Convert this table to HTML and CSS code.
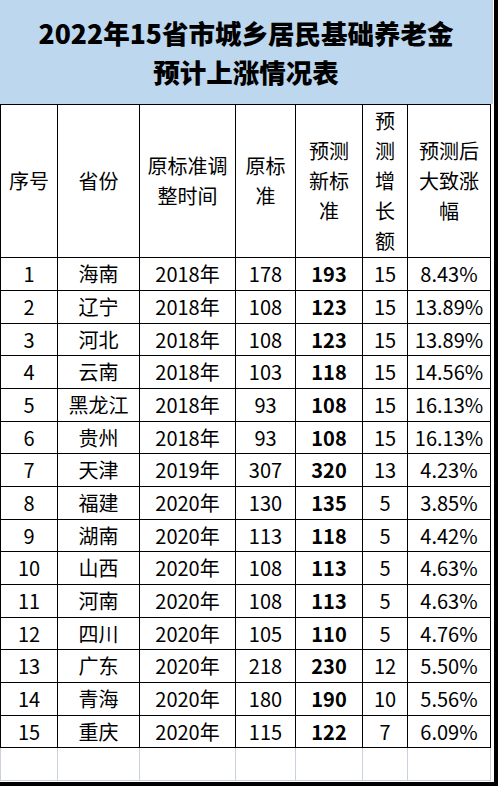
FILE: index.html
```html
<!DOCTYPE html>
<html lang="zh-CN">
<head>
<meta charset="utf-8">
<title>2022年15省市城乡居民基础养老金预计上涨情况表</title>
<link rel="stylesheet" href="styles.css">
</head>
<body>
<div class="frame">
  <div class="title">
    <div class="title-line">2022年15省市城乡居民基础养老金</div>
    <div class="title-line">预计上涨情况表</div>
  </div>
  <table class="sheet">
    <colgroup>
      <col class="c1"><col class="c2"><col class="c3"><col class="c4"><col class="c5"><col class="c6"><col class="c7">
    </colgroup>
    <thead>
      <tr class="head">
        <th>序号</th>
        <th>省份</th>
        <th>原标准调<br>整时间</th>
        <th>原标<br>准</th>
        <th>预测<br>新标<br>准</th>
        <th>预<br>测<br>增<br>长<br>额</th>
        <th>预测后<br>大致涨<br>幅</th>
      </tr>
    </thead>
    <tbody>
      <tr class="ra"><td>1</td><td>海南</td><td>2018年</td><td>178</td><td class="b">193</td><td>15</td><td>8.43%</td></tr>
      <tr class="ra"><td>2</td><td>辽宁</td><td>2018年</td><td>108</td><td class="b">123</td><td>15</td><td>13.89%</td></tr>
      <tr class="rb"><td>3</td><td>河北</td><td>2018年</td><td>108</td><td class="b">123</td><td>15</td><td>13.89%</td></tr>
      <tr class="ra"><td>4</td><td>云南</td><td>2018年</td><td>103</td><td class="b">118</td><td>15</td><td>14.56%</td></tr>
      <tr class="ra"><td>5</td><td>黑龙江</td><td>2018年</td><td>93</td><td class="b">108</td><td>15</td><td>16.13%</td></tr>
      <tr class="rb"><td>6</td><td>贵州</td><td>2018年</td><td>93</td><td class="b">108</td><td>15</td><td>16.13%</td></tr>
      <tr class="ra"><td>7</td><td>天津</td><td>2019年</td><td>307</td><td class="b">320</td><td>13</td><td>4.23%</td></tr>
      <tr class="ra"><td>8</td><td>福建</td><td>2020年</td><td>130</td><td class="b">135</td><td>5</td><td>3.85%</td></tr>
      <tr class="rb"><td>9</td><td>湖南</td><td>2020年</td><td>113</td><td class="b">118</td><td>5</td><td>4.42%</td></tr>
      <tr class="ra"><td>10</td><td>山西</td><td>2020年</td><td>108</td><td class="b">113</td><td>5</td><td>4.63%</td></tr>
      <tr class="ra"><td>11</td><td>河南</td><td>2020年</td><td>108</td><td class="b">113</td><td>5</td><td>4.63%</td></tr>
      <tr class="rb"><td>12</td><td>四川</td><td>2020年</td><td>105</td><td class="b">110</td><td>5</td><td>4.76%</td></tr>
      <tr class="ra"><td>13</td><td>广东</td><td>2020年</td><td>218</td><td class="b">230</td><td>12</td><td>5.50%</td></tr>
      <tr class="ra"><td>14</td><td>青海</td><td>2020年</td><td>180</td><td class="b">190</td><td>10</td><td>5.56%</td></tr>
      <tr class="rb"><td>15</td><td>重庆</td><td>2020年</td><td>115</td><td class="b">122</td><td>7</td><td>6.09%</td></tr>
      <tr class="empty"><td></td><td></td><td></td><td></td><td></td><td></td><td></td></tr>
    </tbody>
  </table>
</div>
</body>
</html>
```

FILE: styles.css
```css
html, body {
  margin: 0;
  padding: 0;
  background: #ffffff;
}

.frame {
  width: 494px;
  height: 782px;
  border-right: 4px solid #000;
  border-bottom: 4px solid #000;
  background: #fff;
  overflow: hidden;
}

.title {
  width: 492px;
  height: 104px;
  background: #bdd7ee;
  border-right: 1px solid #c6cdd8;
  display: flex;
  flex-direction: column;
  justify-content: center;
  align-items: center;
  font-family: "Noto Sans CJK SC", sans-serif;
  font-weight: 900;
  font-size: 26.5px;
  line-height: 39px;
  color: #000;
}

.title-line {
  white-space: nowrap;
}

.sheet {
  width: 491px;
  table-layout: fixed;
  border-collapse: collapse;
  font-family: "Noto Sans CJK SC", sans-serif;
  font-size: 20px;
  color: #000;
}

.c1 { width: 57px; }
.c2 { width: 82px; }
.c3 { width: 96px; }
.c4 { width: 60px; }
.c5 { width: 67px; }
.c6 { width: 45px; }
.c7 { width: 83px; }

.sheet th,
.sheet td {
  border: 1px solid #000;
  padding: 0;
  text-align: center;
  vertical-align: middle;
  font-weight: 400;
  white-space: nowrap;
  overflow: hidden;
}

.sheet th {
  line-height: 30px;
}

.sheet td {
  line-height: 24px;
}

.head { height: 153px; }
.ra { height: 33px; }
.rb { height: 32px; }

.sheet td.b {
  font-weight: 700;
}

.empty { height: 33px; }

.empty td {
  border-color: #cbd1dc;
  border-top-color: #000;
}
```
